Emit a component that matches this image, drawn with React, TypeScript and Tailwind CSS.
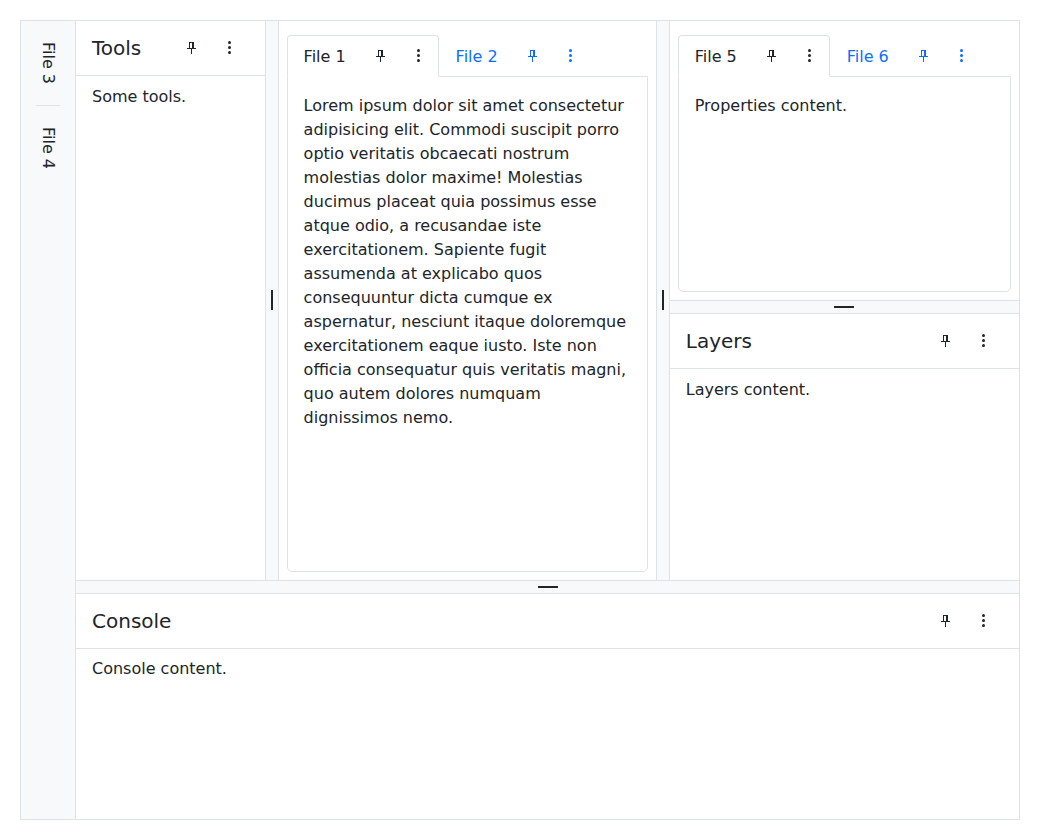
import type { ReactNode } from 'react';

function PinIcon() {
  return (
    <svg width="16" height="16" viewBox="0 0 16 16" fill="currentColor" shapeRendering="crispEdges">
      <path d="M5 2h5v6h2v1H8v5H7V9H3V8h2zM6 3v5h2V3z" fillRule="evenodd" />
    </svg>
  );
}

function DotsIcon() {
  return (
    <svg width="16" height="16" viewBox="0 0 16 16" fill="currentColor">
      <circle cx="7.5" cy="2.5" r="1.5" />
      <circle cx="7.5" cy="7.5" r="1.5" />
      <circle cx="7.5" cy="12.5" r="1.5" />
    </svg>
  );
}

function Actions() {
  return (
    <div className="flex shrink-0">
      <button type="button" aria-label="Pin" className="flex w-[38px] justify-center">
        <PinIcon />
      </button>
      <button type="button" aria-label="Menu" className="flex w-[38px] justify-center">
        <DotsIcon />
      </button>
    </div>
  );
}

function Panel({
  title,
  inset = 'pl-4',
  bodyTop = 'pt-[9px]',
  children,
}: {
  title: string;
  inset?: string;
  bodyTop?: string;
  children: ReactNode;
}) {
  return (
    <section className="flex min-h-0 flex-1 flex-col">
      <header
        className={`flex h-[55px] shrink-0 items-center justify-between border-b border-[#dee2e6] pr-4 ${inset}`}
      >
        <h2 className="text-xl leading-[30px]">{title}</h2>
        <Actions />
      </header>
      <div className={`pr-4 ${inset} ${bodyTop}`}>{children}</div>
    </section>
  );
}

function Tab({ label, inset, active = false }: { label: string; inset: string; active?: boolean }) {
  const look = active
    ? 'rounded-t-[4px] border-[#dee2e6] border-b-white bg-white'
    : 'border-transparent text-[#0d6efd]';
  return (
    <div className={`relative -mb-px flex h-[42px] w-[152px] items-center justify-between border ${look} ${inset}`}>
      <span className="pt-0.5">{label}</span>
      <Actions />
    </div>
  );
}

function TabGroup({ tabs, inset, children }: { tabs: string[]; inset: string; children: ReactNode }) {
  return (
    <section className="flex min-h-0 flex-1 flex-col px-2 pt-3.5 pb-2">
      <div className="flex shrink-0">
        {tabs.map((tab, i) => (
          <Tab key={tab} label={tab} inset={inset} active={i === 0} />
        ))}
      </div>
      <div className={`min-h-0 flex-1 rounded-b-[5px] border border-[#dee2e6] pt-[17px] pr-4 ${inset}`}>
        {children}
      </div>
    </section>
  );
}

function ColumnGutter() {
  return (
    <div className="flex w-3.5 shrink-0 items-center justify-center border-x border-[#dee2e6] bg-[#f8f9fa] pb-px">
      <div className="h-5 w-0.5 bg-[#212529]" />
    </div>
  );
}

function RowGutter({ offset = '' }: { offset?: string }) {
  return (
    <div
      className={`flex h-3.5 shrink-0 items-center justify-center border-y border-[#dee2e6] bg-[#f8f9fa] ${offset}`}
    >
      <div className="h-0.5 w-5 bg-[#212529]" />
    </div>
  );
}

export default function App() {
  return (
    <div className="h-[840px] w-[1040px] bg-white p-5 font-['DejaVu_Sans',sans-serif] text-base leading-6 text-[#212529]">
      <div className="flex h-full border border-[#dee2e6]">
        <aside className="flex w-[55px] shrink-0 flex-col border-r border-[#dee2e6] bg-[#f8f9fa] px-[15px]">
          <div className="flex h-[85px] items-center justify-center border-b border-[#dee2e6] [writing-mode:vertical-rl]">
            File 3
          </div>
          <div className="flex h-[84px] items-center justify-center [writing-mode:vertical-rl]">File 4</div>
        </aside>
        <main className="flex min-w-0 flex-1 flex-col">
          <div className="flex h-[559px] shrink-0">
            <div className="flex w-[189px] shrink-0 flex-col">
              <Panel title="Tools">Some tools.</Panel>
            </div>
            <ColumnGutter />
            <div className="flex w-[377px] shrink-0 flex-col">
              <TabGroup tabs={['File 1', 'File 2']} inset="pl-[15.6px]">
                Lorem ipsum dolor sit amet consectetur adipisicing elit. Commodi suscipit porro optio veritatis
                obcaecati nostrum molestias dolor maxime! Molestias ducimus placeat quia possimus esse atque odio, a
                recusandae iste exercitationem. Sapiente fugit assumenda at explicabo quos consequuntur dicta cumque
                ex aspernatur, nesciunt itaque doloremque exercitationem eaque iusto. Iste non officia consequatur
                quis veritatis magni, quo autem dolores numquam dignissimos nemo.
              </TabGroup>
            </div>
            <ColumnGutter />
            <div className="flex min-w-0 flex-1 flex-col">
              <div className="flex h-[279px] shrink-0 flex-col">
                <TabGroup tabs={['File 5', 'File 6']} inset="pl-[15.75px]">
                  Properties content.
                </TabGroup>
              </div>
              <RowGutter offset="pr-px" />
              <Panel title="Layers" inset="pl-[15.75px]">
                Layers content.
              </Panel>
            </div>
          </div>
          <RowGutter />
          <Panel title="Console" bodyTop="pt-2">
            Console content.
          </Panel>
        </main>
      </div>
    </div>
  );
}
